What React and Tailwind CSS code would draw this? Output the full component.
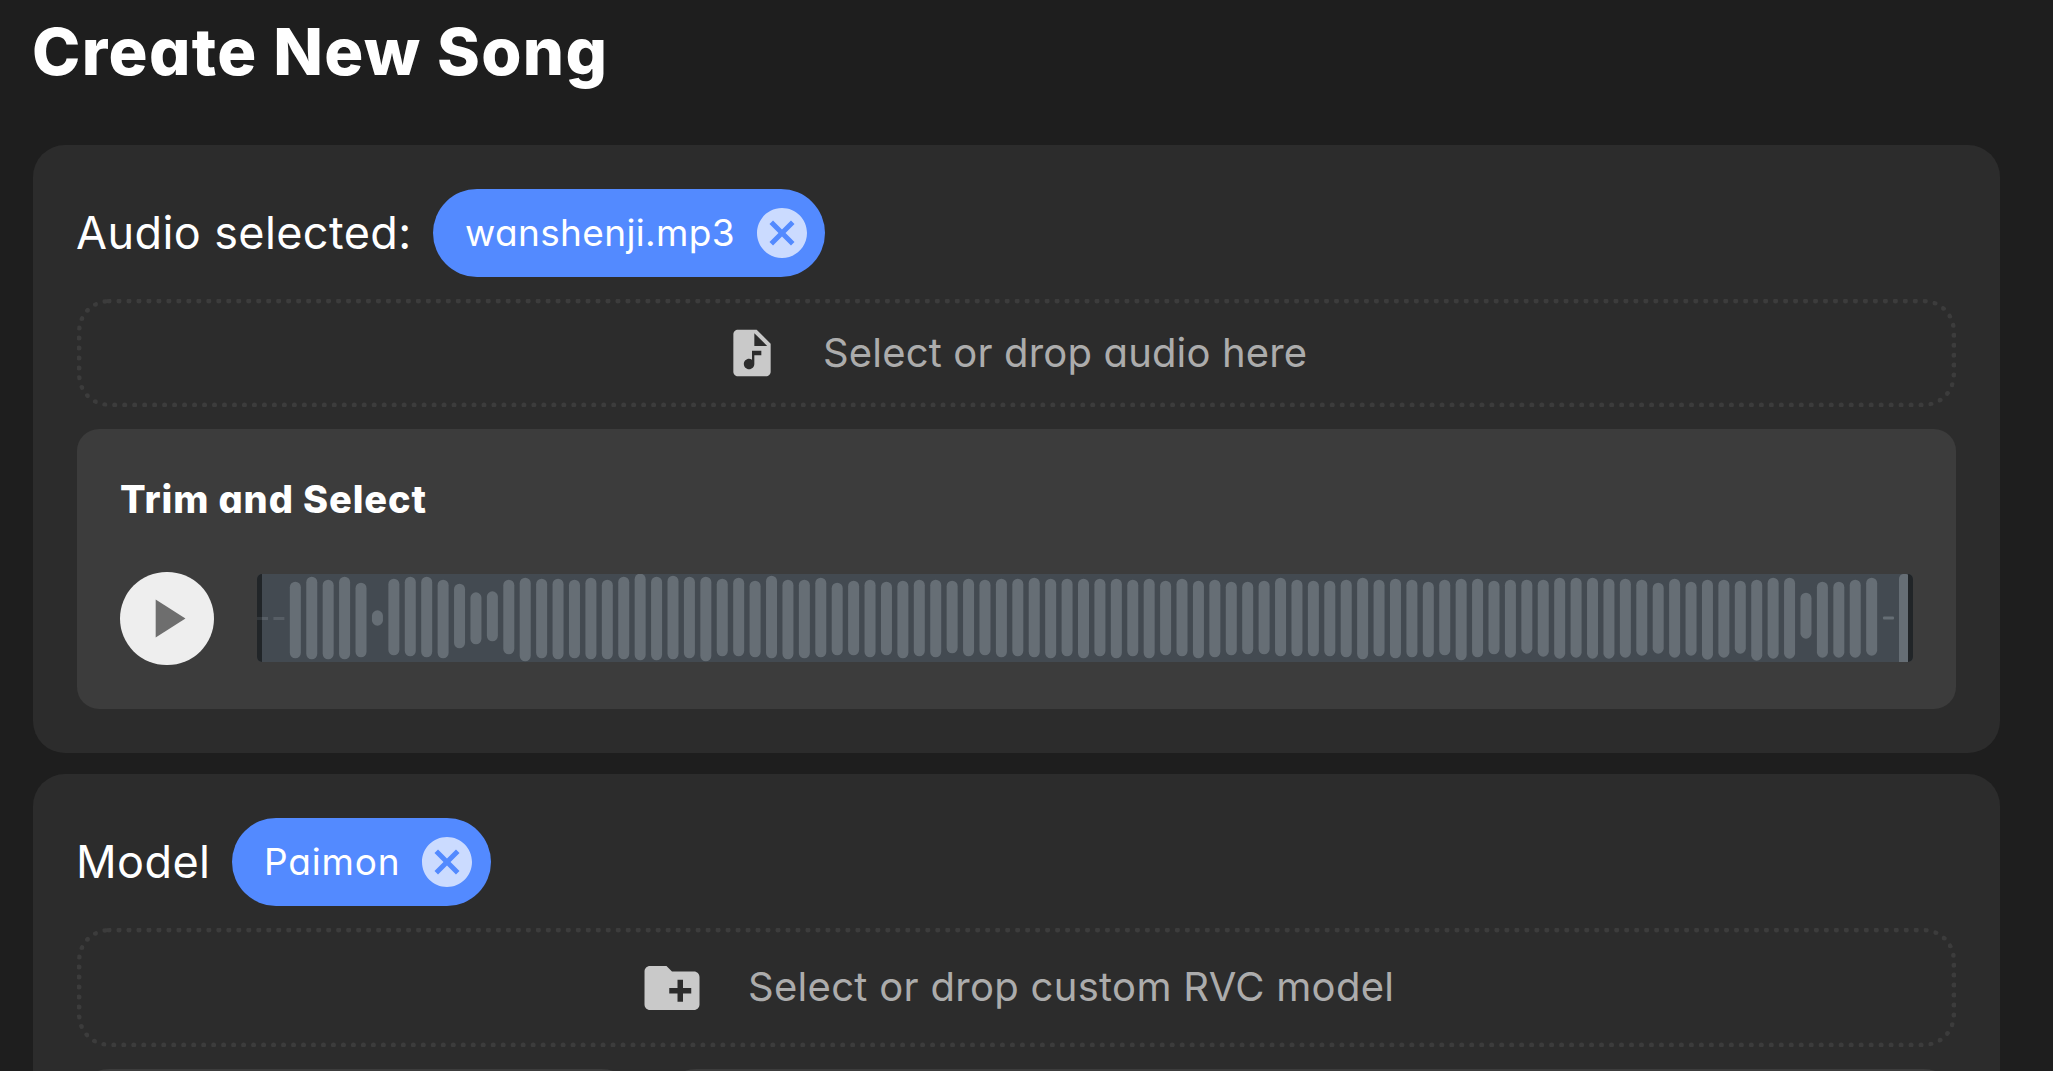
import { MdAudioFile, MdCancel, MdCreateNewFolder, MdPlayArrow } from "react-icons/md";

// Top and bottom of each bar in thirds of a pixel; the track's top edge is at 42.
const BARS = [
  [130, 140], [130, 140],
  [65, 295], [50, 298], [59, 298], [50, 298], [68, 292], [151, 197], [56, 286], [50, 289], [50, 292], [59, 295],
  [71, 265], [97, 253], [94, 244], [59, 283], [53, 304], [56, 295], [56, 298], [59, 295], [53, 298], [59, 298],
  [50, 298], [41, 301], [50, 301], [47, 298], [50, 295], [50, 304], [56, 289], [53, 289], [62, 292], [47, 295],
  [59, 298], [59, 295], [53, 292], [68, 286], [62, 286], [59, 292], [65, 286], [62, 295], [59, 289], [59, 292],
  [62, 280], [56, 289], [59, 286], [56, 292], [56, 289], [53, 292], [56, 295], [56, 289], [56, 295], [56, 289],
  [56, 295], [59, 289], [56, 295], [62, 286], [56, 289], [62, 295], [59, 292], [65, 286], [65, 283], [62, 283],
  [53, 289], [59, 289], [62, 289], [62, 289], [59, 292], [53, 298], [59, 289], [56, 295], [59, 292], [65, 292],
  [59, 286], [56, 301], [56, 292], [62, 283], [59, 293], [59, 281], [59, 290], [53, 296], [53, 293], [53, 296],
  [56, 296], [56, 293], [59, 287], [68, 281], [56, 293], [65, 287], [59, 299], [59, 293], [62, 281], [59, 302],
  [53, 296], [53, 296], [98, 236], [65, 293], [65, 293], [59, 293], [53, 287],
];

function Waveform() {
  return (
    <svg width="1656" height="88" viewBox="0 0 1656 88" className="mt-[2px] block shrink-0 rounded-[5px]">
      <rect width="1656" height="88" fill="#434a51" />
      {BARS.slice(2).map(([top, bottom], i) => (
        <rect
          key={i}
          x={(i + 2) * 16.42}
          y={(top - 42) / 3}
          width="11"
          height={(bottom - top) / 3}
          rx="5.5"
          fill="#666e75"
        />
      ))}
      <rect x="5" y="43" width="6" height="3" fill="#575e65" />
      <rect x="16.4" y="43" width="11" height="3" fill="#575e65" />
      <rect x="1626" y="42.4" width="11" height="3.2" rx="1" fill="#666e75" />
      <path d="M1642 88V5.500a5.500 5.500 0 0 1 9 -4.500V88z" fill="#666e75" />
      <rect width="5" height="88" fill="#212528" />
      <rect y="43" width="5" height="3" fill="#32373b" />
      <rect x="1651" width="5" height="88" fill="#212528" />
    </svg>
  );
}

function Chip({ label, className, textClass }) {
  return (
    <div className={`flex h-[88px] items-center justify-between rounded-full bg-[#538aff] pl-[32px] ${className}`}>
      <span className={`pb-[2px] text-[37px] leading-none whitespace-nowrap ${textClass}`}>{label}</span>
      <MdCancel size={60} className="shrink-0 text-[#cbdbff]" />
    </div>
  );
}

function DropZone({ icon, label, className, textClass }) {
  return (
    <div className={`flex items-center rounded-[32px] border-[5px] border-dotted border-[#3c3c3c] text-[#acacac] ${className}`}>
      {icon}
      <span className={`text-[40px] leading-none whitespace-nowrap ${textClass}`}>{label}</span>
    </div>
  );
}

export default function App() {
  return (
    <main className="h-[1071px] w-[2053px] overflow-hidden bg-[#1e1e1e] pl-[33px] font-['Inter',sans-serif] text-white [font-feature-settings:'cv11']">
      <h1 className="-ml-px flex h-[145px] items-start pt-[20px] text-[65px] leading-[64px] font-extrabold tracking-[1.35px] whitespace-nowrap">
        Create New Song
      </h1>

      <section className="h-[608px] w-[1967px] rounded-[32px] bg-[#2c2c2c] pt-[44px] pl-[44px]">
        <div className="flex items-center">
          <h2 className="-ml-px w-[357px] pb-[2px] text-[45px] leading-none tracking-[0.4px] whitespace-nowrap">Audio selected:</h2>
          <Chip label="wanshenji.mp3" className="w-[392px] pr-[13px]" textClass="tracking-[0.35px]" />
        </div>
        <DropZone
          className="mt-[22px] h-[108px] w-[1879px] pl-[642px]"
          icon={<MdAudioFile size={56} className="shrink-0 text-[#c9c9c9]" />}
          label="Select or drop audio here"
          textClass="ml-[43px] pb-px tracking-[0.16px]"
        />
        <div className="mt-[22px] h-[280px] w-[1879px] rounded-[22px] bg-[#3c3c3c] px-[43px] pt-[50px]">
          <h3 className="text-[38px] leading-[40px] font-extrabold tracking-[0.9px] whitespace-nowrap">Trim and Select</h3>
          <div className="mt-[53px] flex items-start">
            <button className="mr-[43px] flex h-[93px] w-[94px] items-center justify-center rounded-full bg-[#eeeeee]">
              <MdPlayArrow size={65} className="-ml-px text-[#6e6e6e]" />
            </button>
            <Waveform />
          </div>
        </div>
      </section>

      <section className="mt-[21px] h-[400px] w-[1967px] rounded-t-[32px] bg-[#2c2c2c] pt-[44px] pl-[44px]">
        <div className="flex items-center">
          <h2 className="-ml-px w-[156px] pb-[2px] text-[45px] leading-none tracking-[0.4px] whitespace-nowrap">Model</h2>
          <Chip label="Paimon" className="w-[259px] pr-[14px]" textClass="tracking-[0.8px]" />
        </div>
        <DropZone
          className="mt-[22px] h-[119px] w-[1879px] pl-[557px]"
          icon={<MdCreateNewFolder size={66} className="shrink-0 text-[#c9c9c9]" />}
          label="Select or drop custom RVC model"
          textClass="ml-[43px] pb-[2px] tracking-[0.3px]"
        />
        <div className="mt-[22px] flex gap-[30px]">
          <div className="h-[120px] w-[557px] rounded-[32px] bg-[#3c3c3c]" />
          <div className="h-[120px] w-[1292px] rounded-[32px] bg-[#3c3c3c]" />
        </div>
      </section>
    </main>
  );
}
